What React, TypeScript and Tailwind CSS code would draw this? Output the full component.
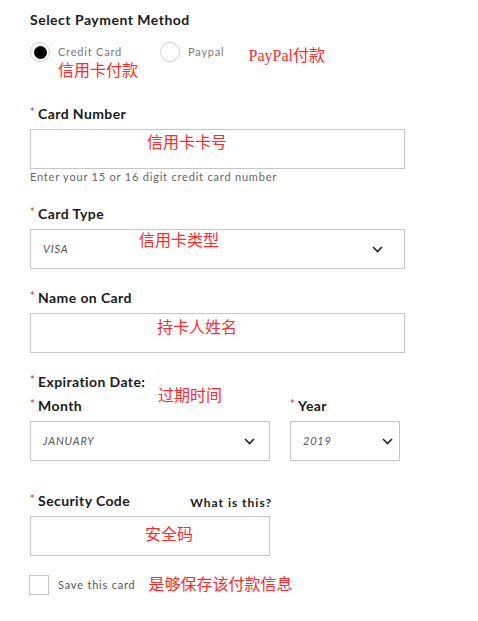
import React from 'react';

const note = "text-[16px] leading-[16px] text-[#ff2a2a] [font-family:'Liberation_Serif','Noto_Sans_CJK_SC',serif] whitespace-nowrap";

const Star = () => (
    <span className="text-[#d0605a] text-[11px] leading-none mr-[3px] relative -top-[2px]">*</span>
);

const Label = ({ children }: { children: React.ReactNode }) => (
    <div className="flex items-center h-[20px] text-[14px] font-bold tracking-[0.4px] text-[#1a1a1a]">
        <Star />
        {children}
    </div>
);

const Chevron = () => (
    <svg width="11" height="7" viewBox="0 0 11 7" fill="none">
        <path d="M1 1l4.5 4.5L10 1" stroke="#222" strokeWidth="1.6" />
    </svg>
);

const Select = ({ value, className, arrowPad }: { value: string; className: string; arrowPad: string }) => (
    <div className={`relative h-[40px] border border-[#c6c6c6] flex items-center justify-between pl-[12px] ${arrowPad} ${className}`}>
        <span className="text-[11px] italic text-[#555] tracking-[0.8px]">{value}</span>
        <Chevron />
    </div>
);

export default function App() {
    return (
        <div className="w-[478px] min-h-[621px] bg-white px-[30px] pt-[9px] [font-family:Lato,'Noto_Sans',sans-serif]">
            <div className="h-[20px] flex items-center text-[14px] font-bold tracking-[0.5px] text-[#1a1a1a]">Select Payment Method</div>

            {/* Payment method */}
            <div className="mt-[13px] flex items-center h-[20px]">
                <div className="relative flex items-center">
                    <span className="size-[20px] rounded-full border border-[#cfcfcf] flex items-center justify-center">
                        <span className="size-[13px] rounded-full bg-black" />
                    </span>
                    <span className="ml-[8px] text-[11px] tracking-[0.8px] text-[#7a7a7a]">Credit Card</span>
                    <span className={`absolute left-[28px] top-[21px] ${note}`}>信用卡付款</span>
                </div>
                <div className="ml-[38px] flex items-center">
                    <span className="size-[20px] rounded-full border border-[#cfcfcf]" />
                    <span className="ml-[8px] text-[11px] tracking-[0.8px] text-[#7a7a7a]">Paypal</span>
                </div>
                <span className={`ml-[24px] mt-[7px] ${note}`}>PayPal付款</span>
            </div>

            {/* Card number */}
            <div className="mt-[41px]">
                <Label>Card Number</Label>
                <div className="relative mt-[6px] h-[40px] w-[375px] border border-[#c6c6c6]">
                    <span className={`absolute left-[116px] top-[5px] ${note}`}>信用卡卡号</span>
                </div>
                <div className="text-[11px] leading-[16px] tracking-[0.8px] text-[#666]">Enter your 15 or 16 digit credit card number</div>
            </div>

            {/* Card type */}
            <div className="mt-[18px]">
                <Label>Card Type</Label>
                <div className="relative mt-[6px]">
                    <Select value="VISA" className="w-[375px]" arrowPad="pr-[21px]" />
                    <span className={`absolute left-[109px] top-[4px] ${note}`}>信用卡类型</span>
                </div>
            </div>

            {/* Name */}
            <div className="mt-[18px]">
                <Label>Name on Card</Label>
                <div className="relative mt-[6px] h-[40px] w-[375px] border border-[#c6c6c6]">
                    <span className={`absolute left-[126px] top-[6px] ${note}`}>持卡人姓名</span>
                </div>
            </div>

            {/* Expiration */}
            <div className="relative mt-[18px]">
                <Label>Expiration Date:</Label>
                <span className={`absolute left-[128px] top-[17px] ${note}`}>过期时间</span>
                <div className="mt-[4px] flex gap-[20px]">
                    <div>
                        <Label>Month</Label>
                        <Select value="JANUARY" className="mt-[6px] w-[240px]" arrowPad="pr-[14px]" />
                    </div>
                    <div>
                        <Label>Year</Label>
                        <Select value="2019" className="mt-[6px] w-[110px]" arrowPad="pr-[6px]" />
                    </div>
                </div>
            </div>

            {/* Security code */}
            <div className="mt-[29px] w-[242px]">
                <div className="flex items-baseline justify-between">
                    <Label>Security Code</Label>
                    <span className="text-[12px] font-bold tracking-[1px] text-[#1a1a1a] relative top-[2px]">What is this?</span>
                </div>
                <div className="relative mt-[6px] h-[40px] w-[240px] border border-[#c6c6c6]">
                    <span className={`absolute left-[114px] top-[10px] ${note}`}>安全码</span>
                </div>
            </div>

            {/* Save card */}
            <div className="mt-[19px] flex items-center -ml-[1px]">
                <span className="size-[20px] border border-[#c6c6c6]" />
                <span className="ml-[9px] text-[11px] tracking-[0.8px] text-[#555]">Save this card</span>
                <span className={`ml-[13px] ${note}`}>是够保存该付款信息</span>
            </div>
        </div>
    );
}
